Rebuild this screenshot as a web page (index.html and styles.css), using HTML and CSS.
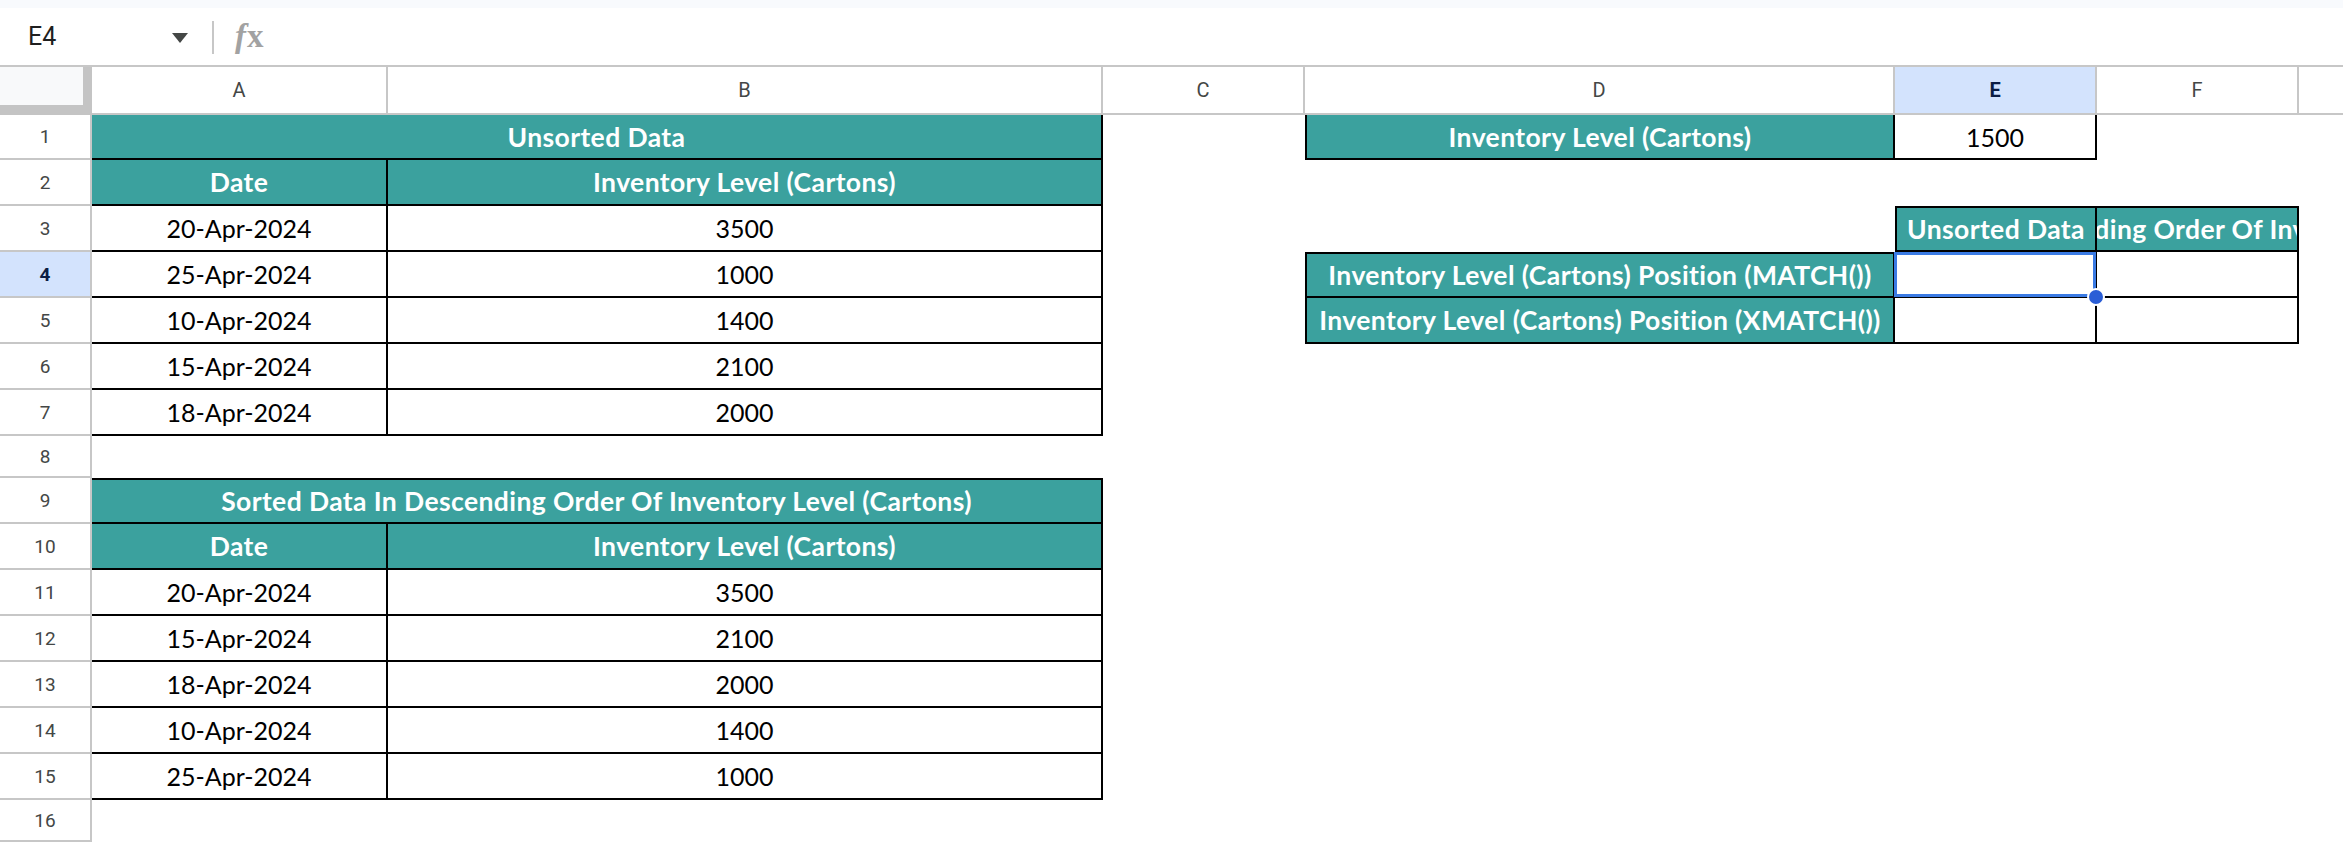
FILE: index.html
```html
<!DOCTYPE html>
<html lang="en">
<head>
<meta charset="utf-8">
<title>Sheet</title>
<link rel="stylesheet" href="styles.css">
</head>
<body>
<div class="app">
  <div class="topstrip"></div>
  <div class="formula-bar">
    <div class="namebox"><span class="name">E4</span><span class="caret"></span></div>
    <div class="divider"></div>
    <div class="fx"><span class="fx-f">f</span><span class="fx-x">x</span></div>
  </div>
  <div class="sheet">
    <div class="corner"></div>
    <div class="colh">A</div>
    <div class="colh">B</div>
    <div class="colh">C</div>
    <div class="colh">D</div>
    <div class="colh colh-sel">E</div>
    <div class="colh">F</div>
    <div class="colh">G</div>

    <div class="rh">1</div>
    <div class="c hd span2 bb br">Unsorted Data</div>
    <div class="c"></div>
    <div class="c hd bl bb br">Inventory Level (Cartons)</div>
    <div class="c bb br">1500</div>
    <div class="c"></div>
    <div class="c"></div>

    <div class="rh">2</div>
    <div class="c hd bb br">Date</div>
    <div class="c hd bb br">Inventory Level (Cartons)</div>
    <div class="c"></div>
    <div class="c"></div>
    <div class="c"></div>
    <div class="c"></div>
    <div class="c"></div>

    <div class="rh">3</div>
    <div class="c bb br">20-Apr-2024</div>
    <div class="c bb br">3500</div>
    <div class="c"></div>
    <div class="c"></div>
    <div class="c hd bt bl bb br">Unsorted Data</div>
    <div class="c hd bt bb br"><span class="overflow">Sorted Data In Descending Order Of Inventory Level (Cartons)</span></div>
    <div class="c"></div>

    <div class="rh rh-sel">4</div>
    <div class="c bb br">25-Apr-2024</div>
    <div class="c bb br">1000</div>
    <div class="c"></div>
    <div class="c hd bt bl bb br">Inventory Level (Cartons) Position (MATCH())</div>
    <div class="c bb br active"><span class="handle"></span></div>
    <div class="c bb br"></div>
    <div class="c"></div>

    <div class="rh">5</div>
    <div class="c bb br">10-Apr-2024</div>
    <div class="c bb br">1400</div>
    <div class="c"></div>
    <div class="c hd bl bb br">Inventory Level (Cartons) Position (XMATCH())</div>
    <div class="c bb br"></div>
    <div class="c bb br"></div>
    <div class="c"></div>

    <div class="rh">6</div>
    <div class="c bb br">15-Apr-2024</div>
    <div class="c bb br">2100</div>
    <div class="c"></div>
    <div class="c"></div>
    <div class="c"></div>
    <div class="c"></div>
    <div class="c"></div>

    <div class="rh">7</div>
    <div class="c bb br">18-Apr-2024</div>
    <div class="c bb br">2000</div>
    <div class="c"></div>
    <div class="c"></div>
    <div class="c"></div>
    <div class="c"></div>
    <div class="c"></div>

    <div class="rh">8</div>
    <div class="c"></div>
    <div class="c"></div>
    <div class="c"></div>
    <div class="c"></div>
    <div class="c"></div>
    <div class="c"></div>
    <div class="c"></div>

    <div class="rh">9</div>
    <div class="c hd span2 bt bb br">Sorted Data In Descending Order Of Inventory Level (Cartons)</div>
    <div class="c"></div>
    <div class="c"></div>
    <div class="c"></div>
    <div class="c"></div>
    <div class="c"></div>

    <div class="rh">10</div>
    <div class="c hd bb br">Date</div>
    <div class="c hd bb br">Inventory Level (Cartons)</div>
    <div class="c"></div>
    <div class="c"></div>
    <div class="c"></div>
    <div class="c"></div>
    <div class="c"></div>

    <div class="rh">11</div>
    <div class="c bb br">20-Apr-2024</div>
    <div class="c bb br">3500</div>
    <div class="c"></div>
    <div class="c"></div>
    <div class="c"></div>
    <div class="c"></div>
    <div class="c"></div>

    <div class="rh">12</div>
    <div class="c bb br">15-Apr-2024</div>
    <div class="c bb br">2100</div>
    <div class="c"></div>
    <div class="c"></div>
    <div class="c"></div>
    <div class="c"></div>
    <div class="c"></div>

    <div class="rh">13</div>
    <div class="c bb br">18-Apr-2024</div>
    <div class="c bb br">2000</div>
    <div class="c"></div>
    <div class="c"></div>
    <div class="c"></div>
    <div class="c"></div>
    <div class="c"></div>

    <div class="rh">14</div>
    <div class="c bb br">10-Apr-2024</div>
    <div class="c bb br">1400</div>
    <div class="c"></div>
    <div class="c"></div>
    <div class="c"></div>
    <div class="c"></div>
    <div class="c"></div>

    <div class="rh">15</div>
    <div class="c bb br">25-Apr-2024</div>
    <div class="c bb br">1000</div>
    <div class="c"></div>
    <div class="c"></div>
    <div class="c"></div>
    <div class="c"></div>
    <div class="c"></div>

    <div class="rh">16</div>
    <div class="c"></div>
    <div class="c"></div>
    <div class="c"></div>
    <div class="c"></div>
    <div class="c"></div>
    <div class="c"></div>
    <div class="c"></div>
  </div>
</div>
</body>
</html>
```

FILE: styles.css
```css
html, body {
  margin: 0;
  padding: 0;
  background: #ffffff;
}
body {
  width: 2343px;
  height: 842px;
  overflow: hidden;
}
.app {
  display: flex;
  flex-direction: column;
  width: 2343px;
  height: 842px;
  overflow: hidden;
}
.topstrip {
  height: 8px;
  background: #f8fafd;
  flex: none;
}
.formula-bar {
  flex: none;
  height: 57px;
  border-bottom: 2px solid #c7c7c7;
  display: flex;
  align-items: center;
  background: #ffffff;
}
.namebox {
  width: 188px;
  display: flex;
  align-items: center;
  justify-content: space-between;
  box-sizing: border-box;
  padding-left: 28px;
}
.name {
  font-family: Roboto, "Liberation Sans", sans-serif;
  font-size: 25px;
  color: #1f1f1f;
}
.caret {
  width: 0;
  height: 0;
  border-left: 8px solid transparent;
  border-right: 8px solid transparent;
  border-top: 10px solid #444746;
  margin-top: 2px;
}
.divider {
  width: 2px;
  height: 33px;
  background: #c7c7c7;
  margin-left: 24px;
  margin-top: 2px;
}
.fx {
  margin-left: 21px;
  font-family: "Liberation Serif", "DejaVu Serif", serif;
  font-size: 33px;
  color: #a2a2a2;
  font-weight: bold;
  line-height: 1;
  display: flex;
  align-items: baseline;
}
.fx-f {
  font-style: italic;
}
.fx-x {
  font-style: normal;
  margin-left: 1px;
}
.sheet {
  flex: none;
  display: grid;
  grid-template-columns: 92px 296px 715px 202px 590px 202px 202px 202px;
  grid-template-rows: 48px 45px repeat(6, 46px) 42px repeat(7, 46px) 42px;
  width: 2501px;
}
.corner {
  box-sizing: border-box;
  background: #f8f9fa;
  border-right: 9px solid #c4c4c4;
  border-bottom: 10px solid #c4c4c4;
}
.colh {
  box-sizing: border-box;
  border-right: 2px solid #c7c7c7;
  border-bottom: 2px solid #c7c7c7;
  display: flex;
  align-items: center;
  justify-content: center;
  font-family: Roboto, "Liberation Sans", sans-serif;
  font-size: 20px;
  color: #444746;
  background: #ffffff;
}
.colh-sel {
  background: #d3e3fd;
  color: #0b1d44;
  font-weight: bold;
}
.rh {
  box-sizing: border-box;
  border-right: 2px solid #c7c7c7;
  border-bottom: 2px solid #c7c7c7;
  display: flex;
  align-items: center;
  justify-content: center;
  font-family: Roboto, "Liberation Sans", sans-serif;
  font-size: 19px;
  color: #444746;
  background: #ffffff;
}
.rh-sel {
  background: #d3e3fd;
  color: #0b1d44;
  font-weight: bold;
}
.c {
  box-sizing: border-box;
  display: flex;
  align-items: center;
  justify-content: center;
  overflow: hidden;
  white-space: nowrap;
  font-family: Lato, "Open Sans", sans-serif;
  font-size: 25px;
  color: #000000;
  min-width: 0;
}
.hd {
  background: #3ba19e;
  color: #ffffff;
  font-weight: bold;
  font-size: 26.5px;
  letter-spacing: 0.4px;
}
.span2 {
  grid-column: span 2;
}
.bb { border-bottom: 2px solid #000000; }
.br { border-right: 2px solid #000000; }
.bt { border-top: 2px solid #000000; }
.bl { border-left: 2px solid #000000; }
.overflow {
  flex: none;
  white-space: nowrap;
}
.active {
  position: relative;
  overflow: visible;
  z-index: 2;
}
.active::after {
  content: "";
  position: absolute;
  top: 0;
  left: -1px;
  right: -1px;
  bottom: -1px;
  border: 3px solid #3b7be4;
  pointer-events: none;
}
.handle {
  position: absolute;
  right: -10px;
  bottom: -10px;
  width: 14px;
  height: 14px;
  border-radius: 50%;
  background: #2b5ed6;
  border: 2px solid #ffffff;
  z-index: 3;
}
```
